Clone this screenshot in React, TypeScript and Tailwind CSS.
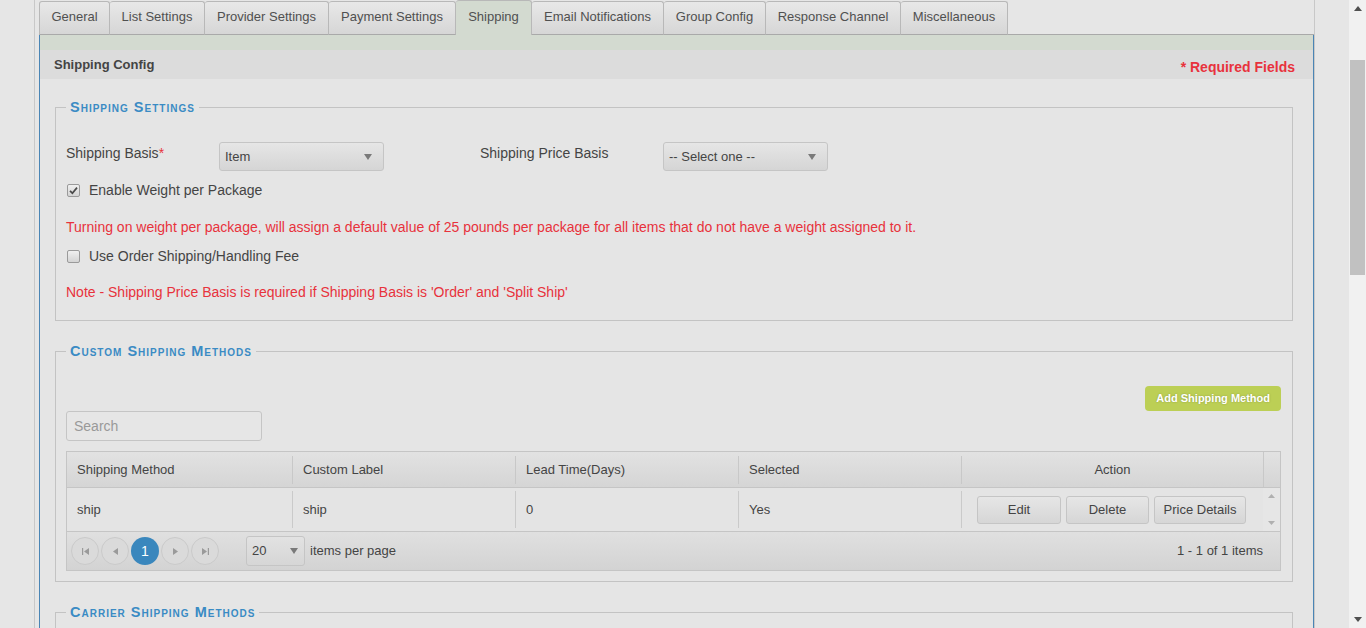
import React from "react";

const tabs = [
  { label: "General", w: "w-[71px]" },
  { label: "List Settings", w: "w-[95px]" },
  { label: "Provider Settings", w: "w-[124px]" },
  { label: "Payment Settings", w: "w-[127px]" },
  { label: "Shipping", w: "w-[76px]", active: true },
  { label: "Email Notifications", w: "w-[132px]" },
  { label: "Group Config", w: "w-[102px]" },
  { label: "Response Channel", w: "w-[135px]" },
  { label: "Miscellaneous", w: "w-[107px]" },
];

function Caret({ className = "" }: { className?: string }) {
  return (
    <svg width="8" height="6" viewBox="0 0 8 6" className={className}>
      <path d="M0 0 L8 0 L4 6 Z" fill="#7a7a7a" />
    </svg>
  );
}

function Select({ value, w }: { value: string; w: string }) {
  return (
    <div className={`${w} h-[29px] flex items-center justify-between pl-[5px] pr-[11px] rounded-[3px] border border-[#c5c5c5] bg-gradient-to-b from-[#e6e6e6] to-[#d5d5d5] text-[13px] text-[#444]`}>
      <span>{value}</span>
      <Caret />
    </div>
  );
}

function Check({ checked }: { checked?: boolean }) {
  return (
    <span className="w-[13px] h-[13px] rounded-[2px] border border-[#9a9a9a] bg-gradient-to-b from-[#f0f0f0] to-[#d4d4d4] flex items-center justify-center">
      {checked && (
        <svg width="9" height="9" viewBox="0 0 9 9">
          <path d="M1 4.8 L3.4 7.2 L8 1.6" fill="none" stroke="#4a4a4a" strokeWidth="1.7" />
        </svg>
      )}
    </span>
  );
}

function Legend({ children, className = "" }: { children: React.ReactNode; className?: string }) {
  return (
    <legend className={`${className} px-[4px] text-[14.5px] font-bold text-[#3a8bc4] tracking-[1px] [font-variant:small-caps] leading-[16px]`}>
      {children}
    </legend>
  );
}

function Btn({ children, w }: { children: React.ReactNode; w: string }) {
  return (
    <div className={`${w} h-[28px] flex items-center justify-center rounded-[3px] border border-[#c5c5c5] bg-gradient-to-b from-[#e6e6e6] to-[#d6d6d6] text-[13px] text-[#444]`}>
      {children}
    </div>
  );
}

function PageBtn({ children, active }: { children: React.ReactNode; active?: boolean }) {
  return (
    <div
      className={`w-[28px] h-[28px] rounded-full flex items-center justify-center ${
        active ? "bg-[#3a87bd] text-white text-[14px]" : "border border-[#cacaca] bg-[#dadada]"
      }`}
    >
      {children}
    </div>
  );
}

const cols = [
  { label: "Shipping Method", w: "w-[225px]", val: "ship" },
  { label: "Custom Label", w: "w-[223px]", val: "ship" },
  { label: "Lead Time(Days)", w: "w-[223px]", val: "0" },
  { label: "Selected", w: "w-[223px]", val: "Yes" },
];

export default function App() {
  return (
    <div className="h-[628px] w-[1366px] overflow-hidden flex bg-[#e6e6e6] font-['Liberation_Sans',Arial,sans-serif] text-[#444]">
      <div className="flex-1 relative">
        <div className="ml-[34px] w-[1281px] h-[628px] border-l border-r border-[#c8c8c8] pl-[4px] flex flex-col">
          {/* Tabs */}
          <div className="flex items-end h-[35px] shrink-0">
            {tabs.map((t, i) => (
              <div
                key={t.label}
                className={`${t.w} flex items-center justify-center pb-[3px] text-[13px] text-[#505050] rounded-t-[3px] border-t border-r border-[#b8b8b8] ${
                  i === 0 ? "border-l" : ""
                } ${
                  t.active
                    ? "h-[35px] bg-[#d3dad0] border-b-0"
                    : "h-[34px] bg-gradient-to-b from-[#e8e8e8] to-[#d6d6d6] border-b border-b-[#a9a9a9]"
                }`}
              >
                {t.label}
              </div>
            ))}
            <div className="flex-1 h-full border-b border-[#a9a9a9]" />
          </div>

          {/* Panel */}
          <div className="flex-1 border-l border-r border-[#4a85b5] bg-[#e5e5e5]">
            <div className="h-[15px] bg-[#d3dad0]" />
            <div className="h-[29px] bg-[#dcdcdc] flex items-center justify-between pl-[14px] pr-[18px]">
              <span className="text-[13px] font-bold text-[#444]">Shipping Config</span>
              <span className="text-[14px] font-bold text-[#e8323c] mt-[5px]">* Required Fields</span>
            </div>

            <div className="pl-[15px] pr-[20px] pt-[20px]">
              {/* Shipping Settings */}
              <fieldset className="border border-[#c3c3c3] px-[10px] pb-[18px]">
                <Legend>Shipping Settings</Legend>
                <div className="flex items-start mt-[27px]">
                  <div className="w-[153px] text-[14px] leading-[20px] pt-[1px]">
                    Shipping Basis<span className="text-[#e8323c]">*</span>
                  </div>
                  <Select value="Item" w="w-[165px]" />
                  <div className="w-[96px]" />
                  <div className="w-[183px] text-[14px] leading-[20px] pt-[1px]">Shipping Price Basis</div>
                  <Select value="-- Select one --" w="w-[165px]" />
                </div>
                <div className="flex items-center mt-[10px] h-[18px] pl-[1px]">
                  <Check checked />
                  <span className="ml-[9px] text-[14px]">Enable Weight per Package</span>
                </div>
                <div className="mt-[18px] text-[14px] leading-[20px] text-[#e8323c]">
                  Turning on weight per package, will assign a default value of 25 pounds per package for all items that do not have a weight assigned to it.
                </div>
                <div className="flex items-center mt-[10px] h-[18px] pl-[1px]">
                  <Check />
                  <span className="ml-[9px] text-[14px]">Use Order Shipping/Handling Fee</span>
                </div>
                <div className="mt-[17px] text-[14px] leading-[20px] text-[#e8323c]">
                  Note - Shipping Price Basis is required if Shipping Basis is 'Order' and 'Split Ship'
                </div>
              </fieldset>

              {/* Custom Shipping Methods */}
              <fieldset className="mt-[22px] border border-[#c3c3c3] pl-[10px] pr-[11px] pb-[10px]">
                <Legend>Custom Shipping Methods</Legend>
                <div className="flex justify-end mt-[27px]">
                  <div className="h-[25px] px-[11px] flex items-center rounded-[4px] bg-[#bccf55] text-white text-[11px] font-bold [text-shadow:0_0_2px_rgba(0,0,0,0.25)]">
                    Add Shipping Method
                  </div>
                </div>
                <div className="w-[196px] h-[30px] flex items-center px-[7px] rounded-[3px] border border-[#c5c5c5] bg-[#e6e6e6] text-[14px] text-[#999]">
                  Search
                </div>

                {/* Grid */}
                <div className="mt-[10px] border border-[#c5c5c5] text-[13px]">
                  <div className="flex h-[36px] border-b border-[#c5c5c5] bg-gradient-to-b from-[#e2e2e2] to-[#d5d5d5]">
                    {cols.map((c, i) => (
                      <div key={c.label} className={`${c.w} flex items-center`}>
                        {i > 0 && <div className="w-px h-[28px] bg-[#c8c8c8]" />}
                        <span className="pl-[10px]">{c.label}</span>
                      </div>
                    ))}
                    <div className="flex-1 flex items-center">
                      <div className="w-px h-[28px] bg-[#c8c8c8]" />
                      <span className="flex-1 text-center">Action</span>
                    </div>
                    <div className="w-[17px] border-l border-[#c8c8c8]" />
                  </div>
                  <div className="flex h-[43px] bg-[#e4e4e4]">
                    {cols.map((c, i) => (
                      <div key={c.label} className={`${c.w} flex items-center`}>
                        {i > 0 && <div className="w-px h-[37px] bg-[#cacaca]" />}
                        <span className="pl-[10px]">{c.val}</span>
                      </div>
                    ))}
                    <div className="flex-1 flex items-center">
                      <div className="w-px h-[37px] bg-[#cacaca]" />
                      <div className="flex gap-[5px] pl-[15px]">
                        <Btn w="w-[84px]">Edit</Btn>
                        <Btn w="w-[83px]">Delete</Btn>
                        <Btn w="w-[92px]">Price Details</Btn>
                      </div>
                    </div>
                    <div className="w-[17px] flex flex-col items-center justify-between py-[6px] bg-[#e6e6e6]">
                      <svg width="7" height="4" viewBox="0 0 7 4"><path d="M0 4 L7 4 L3.5 0 Z" fill="#b0b0b0" /></svg>
                      <svg width="7" height="4" viewBox="0 0 7 4"><path d="M0 0 L7 0 L3.5 4 Z" fill="#b0b0b0" /></svg>
                    </div>
                  </div>
                  <div className="flex items-center h-[39px] border-t border-[#c5c5c5] bg-gradient-to-b from-[#e0e0e0] to-[#d3d3d3] pl-[4px] pr-[17px]">
                    <div className="flex gap-[2px]">
                      <PageBtn>
                        <svg width="7" height="7" viewBox="0 0 7 7"><path d="M0 0 H1.2 V7 H0 Z M7 0 L2 3.5 L7 7 Z" fill="#9a9a9a" /></svg>
                      </PageBtn>
                      <PageBtn>
                        <svg width="5" height="7" viewBox="0 0 5 7"><path d="M5 0 L0 3.5 L5 7 Z" fill="#9a9a9a" /></svg>
                      </PageBtn>
                      <PageBtn active>1</PageBtn>
                      <PageBtn>
                        <svg width="5" height="7" viewBox="0 0 5 7"><path d="M0 0 L5 3.5 L0 7 Z" fill="#9a9a9a" /></svg>
                      </PageBtn>
                      <PageBtn>
                        <svg width="7" height="7" viewBox="0 0 7 7"><path d="M0 0 L5 3.5 L0 7 Z M5.8 0 H7 V7 H5.8 Z" fill="#9a9a9a" /></svg>
                      </PageBtn>
                    </div>
                    <div className="ml-[27px] w-[59px] h-[30px] flex items-center justify-between pl-[5px] pr-[6px] rounded-[3px] border border-[#c5c5c5] bg-gradient-to-b from-[#e2e2e2] to-[#d6d6d6]">
                      <span>20</span>
                      <Caret />
                    </div>
                    <span className="ml-[5px]">items per page</span>
                    <span className="ml-auto">1 - 1 of 1 items</span>
                  </div>
                </div>
              </fieldset>

              {/* Carrier Shipping Methods */}
              <fieldset className="mt-[22px] border border-[#c3c3c3] h-[80px]">
                <Legend className="ml-[10px]">Carrier Shipping Methods</Legend>
              </fieldset>
            </div>
          </div>
        </div>
      </div>

      {/* Scrollbar */}
      <div className="w-[17px] h-full bg-[#f1f1f1] flex flex-col items-center">
        <div className="h-[17px] flex items-center justify-center">
          <svg width="8" height="5" viewBox="0 0 8 5"><path d="M0 5 L8 5 L4 0 Z" fill="#505050" /></svg>
        </div>
        <div className="mt-[43px] w-[15px] h-[215px] bg-[#c1c1c1]" />
        <div className="flex-1" />
        <div className="h-[17px] flex items-center justify-center">
          <svg width="8" height="5" viewBox="0 0 8 5"><path d="M0 0 L8 0 L4 5 Z" fill="#505050" /></svg>
        </div>
      </div>
    </div>
  );
}
